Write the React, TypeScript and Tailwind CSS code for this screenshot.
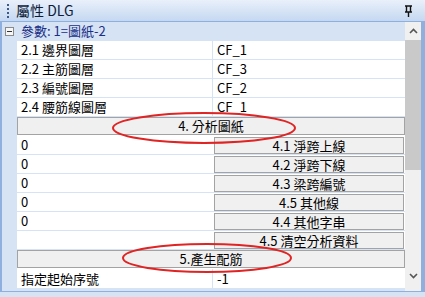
import React from 'react';

const font = { fontFamily: '"Noto Sans CJK TC", "Noto Sans", sans-serif' };

const rows = [
  { name: '2.1 邊界圖層', value: 'CF_1' },
  { name: '2.2 主筋圖層', value: 'CF_3' },
  { name: '2.3 編號圖層', value: 'CF_2' },
  { name: '2.4 腰筋線圖層', value: 'CF_1' },
];

const subs = [
  { left: '0', label: '4.1 淨跨上線' },
  { left: '0', label: '4.2 淨跨下線' },
  { left: '0', label: '4.3 梁跨編號' },
  { left: '0', label: '4.5 其他線' },
  { left: '0', label: '4.4 其他字串' },
  { left: '', label: '4.5 清空分析資料' },
];

const PropRow: React.FC<{ name: string; value: string }> = ({ name, value }) => (
  <div className="flex h-[19px] border-b border-[#d5e3f5] bg-white">
    <div className="w-[196px] pl-[4px] leading-[18px] border-r border-[#d5e3f5]">{name}</div>
    <div className="flex-1 pl-[4px] leading-[18px]">{value}</div>
  </div>
);

const WideButton: React.FC<{ label: string }> = ({ label }) => (
  <div className="h-[19px] bg-white">
    <div className="h-[18px] border border-[#a3a3a3] bg-[#f0f0f0] text-center leading-[16px]">{label}</div>
  </div>
);

const SubRow: React.FC<{ left: string; label: string }> = ({ left, label }) => (
  <div className="flex h-[19px] border-b border-[#d5e3f5] bg-white">
    <div className="w-[197px] pl-[4px] leading-[18px]">{left}</div>
    <div className="flex-1 pr-[1px] pt-[1px]">
      <div className="h-[17px] border border-[#a3a3a3] bg-[#f0f0f0] text-center leading-[15px]">{label}</div>
    </div>
  </div>
);

export default function App() {
  return (
    <div className="relative w-[425px] h-[297px] bg-[#d5e3f5] flex flex-col overflow-hidden text-[13px] text-black" style={font}>
      {/* title bar */}
      <div className="h-[23px] flex items-center bg-gradient-to-b from-[#e9f0fa] to-[#c5d8f1] border-b border-[#8fb0de]">
        <div className="ml-[7px] flex flex-col gap-[2px]">
          <span className="w-[2px] h-[2px] bg-[#3b5a8a]" />
          <span className="w-[2px] h-[2px] bg-[#3b5a8a]" />
          <span className="w-[2px] h-[2px] bg-[#3b5a8a]" />
          <span className="w-[2px] h-[2px] bg-[#3b5a8a]" />
        </div>
        <span className="ml-[7px] text-[14px] text-[#0b1c3a]">屬性 DLG</span>
        <svg className="ml-auto mr-[12px]" width="9" height="12" viewBox="0 0 9 12">
          <path d="M1 1h7M2.5 1v6M6.5 1v6M1 7h7M4.5 7v5" stroke="#111" strokeWidth="1.4" fill="none" />
        </svg>
      </div>

      {/* body */}
      <div className="flex flex-1 border-l-[2px] border-r-[4px] border-[#8fb0de] bg-[#d5e3f5]">
        <div className="flex-1 flex flex-col">
          {/* category */}
          <div className="h-[19px] flex items-center bg-[#d5e3f5] border-b border-[#d5e3f5]">
            <div className="ml-[3px] w-[9px] h-[9px] border border-[#8a8a8a] bg-[#f6f6f6] flex items-center justify-center">
              <div className="w-[5px] h-[1px] bg-[#333]" />
            </div>
            <span className="ml-[7px] text-[#1c2f87]">參數: 1=圖紙-2</span>
          </div>
          <div className="flex flex-1">
            <div className="w-[15px] bg-[#d5e3f5]" />
            <div className="flex-1 flex flex-col">
              {rows.map((r) => (
                <PropRow key={r.name} name={r.name} value={r.value} />
              ))}
              <WideButton label="4. 分析圖紙" />
              {subs.map((s) => (
                <SubRow key={s.label + s.left} left={s.left} label={s.label} />
              ))}
              <WideButton label="5.產生配筋" />
              <div className="flex h-[20px] border-b border-[#d5e3f5] bg-white">
                <div className="w-[196px] pl-[4px] leading-[19px] border-r border-[#d5e3f5]">指定起始序號</div>
                <div className="flex-1 pl-[4px] leading-[19px]">-1</div>
              </div>
              <div className="h-[2px] bg-[#d5e3f5]" />
            </div>
          </div>
        </div>
        {/* scrollbar */}
        <div className="w-[16px] flex flex-col bg-[#f0f0f0]">
          <div className="h-[18px] flex items-center justify-center">
            <svg width="9" height="6" viewBox="0 0 9 6">
              <path d="M1 5l3.5-3.5L8 5" stroke="#555" strokeWidth="1.6" fill="none" />
            </svg>
          </div>
          <div className="h-[130px] bg-[#c9c9c9]" />
          <div className="flex-1" />
          <div className="h-[18px] flex items-center justify-center mb-[6px]">
            <svg width="9" height="6" viewBox="0 0 9 6">
              <path d="M1 1l3.5 3.5L8 1" stroke="#555" strokeWidth="1.6" fill="none" />
            </svg>
          </div>
        </div>
      </div>
      <div className="h-[6px] border-t border-[#8fb0de] bg-[#d5e3f5]" />

      {/* red annotations */}
      <svg className="absolute left-0 top-0 pointer-events-none" width="425" height="297">
        <ellipse cx="204" cy="128" rx="91" ry="15" stroke="#e02424" strokeWidth="2" fill="none" />
        <ellipse cx="207" cy="258" rx="84" ry="14" stroke="#e02424" strokeWidth="2" fill="none" />
      </svg>
    </div>
  );
}
